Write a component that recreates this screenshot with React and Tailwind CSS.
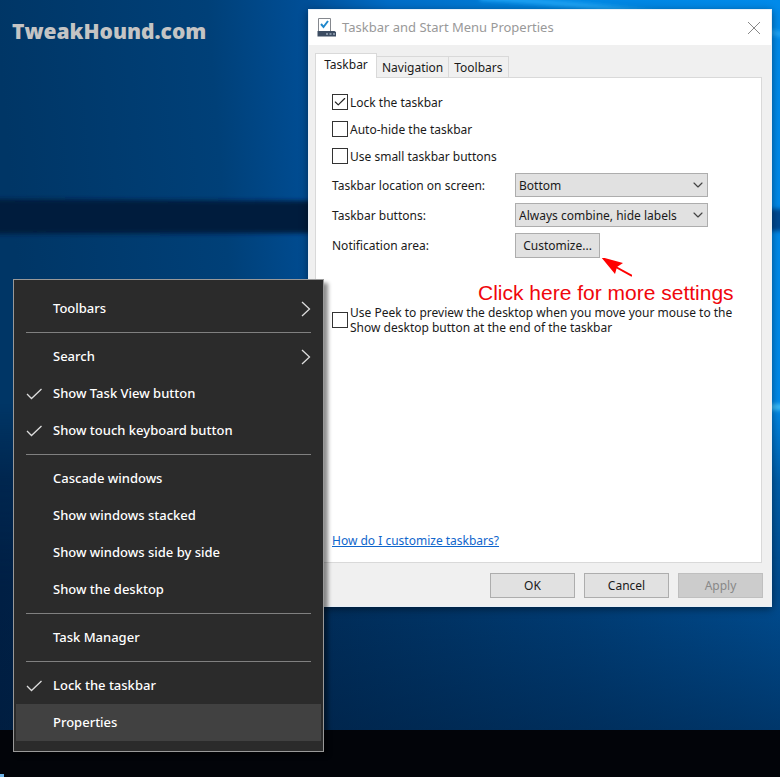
import { Check, ChevronDown } from "lucide-react";

const tabs = ["Taskbar", "Navigation", "Toolbars"];

const options = [
  { id: "lock", label: "Lock the taskbar", checked: true },
  { id: "autohide", label: "Auto-hide the taskbar", checked: false },
  { id: "small", label: "Use small taskbar buttons", checked: false },
];

const menuGroups = [
  [{ label: "Toolbars", submenu: true }],
  [
    { label: "Search", submenu: true },
    { label: "Show Task View button", checked: true },
    { label: "Show touch keyboard button", checked: true },
  ],
  [
    { label: "Cascade windows" },
    { label: "Show windows stacked" },
    { label: "Show windows side by side" },
    { label: "Show the desktop" },
  ],
  [{ label: "Task Manager" }],
  [{ label: "Lock the taskbar", checked: true }, { label: "Properties", active: true }],
];

function Wallpaper() {
  return (
    <svg className="absolute inset-0 h-full w-full" viewBox="0 0 780 777" preserveAspectRatio="none" aria-hidden="true">
      <defs>
        <linearGradient id="sky" x1="0" y1="0.08" x2="1" y2="0">
          <stop offset="0" stopColor="#003666" />
          <stop offset="0.27" stopColor="#004078" />
          <stop offset="0.4" stopColor="#004f98" />
          <stop offset="0.5" stopColor="#006cc6" />
          <stop offset="0.75" stopColor="#0086e2" />
          <stop offset="1" stopColor="#008aea" />
        </linearGradient>
        <linearGradient id="floor" x1="0" y1="0" x2="1" y2="0">
          <stop offset="0" stopColor="#001f44" />
          <stop offset="0.4" stopColor="#002c58" />
          <stop offset="0.75" stopColor="#003c74" />
          <stop offset="1" stopColor="#004a8c" />
        </linearGradient>
        <linearGradient id="fade" x1="0" y1="0" x2="0" y2="1">
          <stop offset="0.52" stopColor="white" stopOpacity="0" />
          <stop offset="0.62" stopColor="white" stopOpacity="0.7" />
          <stop offset="0.76" stopColor="white" stopOpacity="1" />
        </linearGradient>
        <linearGradient id="dusk" x1="0" y1="0" x2="0" y2="1">
          <stop offset="0.78" stopColor="#001c3c" stopOpacity="0" />
          <stop offset="0.95" stopColor="#001c3c" stopOpacity="0.45" />
        </linearGradient>
        <mask id="lower"><rect width="780" height="777" fill="url(#fade)" /></mask>
        <filter id="soft" x="-10%" y="-50%" width="120%" height="200%"><feGaussianBlur stdDeviation="2" /></filter>
        <filter id="glow" filterUnits="userSpaceOnUse" x="740" y="390" width="60" height="34"><feGaussianBlur stdDeviation="2" /></filter>
      </defs>
      <rect width="780" height="777" fill="url(#sky)" />
      <rect width="780" height="777" fill="url(#floor)" mask="url(#lower)" />
      <rect width="780" height="777" fill="url(#dusk)" />
      <path d="M-10 199L320 201V233L-10 234z" fill="#001c3e" filter="url(#soft)" />
      <path d="M760 209H790V231H760z" fill="#004a92" filter="url(#soft)" />
      <path d="M480 -2Q640 6 790 36" stroke="#22a8f8" strokeWidth="5" fill="none" filter="url(#soft)" />
      <path d="M760 407H790" stroke="#3cc0fa" strokeWidth="6" fill="none" filter="url(#glow)" />
    </svg>
  );
}

function PropertiesIcon() {
  return (
    <svg className="h-5 w-5 shrink-0" viewBox="0 0 20 20" fill="none" aria-hidden="true">
      <path d="M1.500 14V.5h12V14" fill="#fff" stroke="#85888e" />
      <path d="M4 6l2.500 3 4.500-6" stroke="#2088cc" strokeWidth="2" />
      <path d="M.5 13h17l1.500 1v4.500H.5z" fill="#3c4c62" />
      <path d="M9 16h2M12.500 16h2M16 16h2" stroke="#9aa9bb" strokeWidth="1.5" />
    </svg>
  );
}

function CheckBox({ id, checked }) {
  return (
    <span className="relative grid h-4 w-4 shrink-0 place-items-center">
      <input id={id} type="checkbox" defaultChecked={checked} className="peer h-4 w-4 appearance-none border border-[#333] bg-white" />
      <Check className="pointer-events-none absolute hidden h-3.5 w-3.5 text-[#222] peer-checked:block" strokeWidth={2} />
    </span>
  );
}

function SelectRow({ id, label, choices }) {
  return (
    <div className="flex items-center">
      <label htmlFor={id} className="w-[183px] shrink-0">{label}</label>
      <div className="relative w-[193px]">
        <select id={id} className="block h-6 w-full appearance-none border border-[#adadad] bg-[#e1e1e1] pl-[3px]">
          {choices.map((c) => <option key={c}>{c}</option>)}
        </select>
        <ChevronDown className="pointer-events-none absolute top-1 right-0.5 h-4 w-4 text-[#444]" strokeWidth={1.75} />
      </div>
    </div>
  );
}

function PropertiesDialog() {
  return (
    <section className="absolute top-[9px] right-2 w-[464px] border border-[#e8f0f8] bg-[#f0f0f0] shadow-[0_2px_8px_rgba(0,0,0,0.45)]">
      <header className="flex h-[35px] items-center bg-white px-2">
        <PropertiesIcon />
        <h1 className="ml-[5px] flex-1 text-[13px] text-[#999]">Taskbar and Start Menu Properties</h1>
        <button aria-label="Close" className="p-0.5">
          <svg className="h-[14px] w-[14px]" viewBox="0 0 14 14" fill="none" stroke="#888" aria-hidden="true">
            <path d="M1 1l12 12M13 1L1 13" />
          </svg>
        </button>
      </header>

      <div className="px-1.5 pt-2 text-[12px] leading-[15px] text-[#1a1a1a]">
        <div role="tablist" className="flex items-end">
          {tabs.map((t, i) => (
            <button
              key={t}
              role="tab"
              aria-selected={i === 0}
              className={i === 0 ? "relative z-10 -mb-px h-[25px] w-[62px] border border-b-0 border-[#d9d9d9] bg-white pb-1" : "h-[21px] border border-b-0 border-l-0 border-[#d9d9d9] px-[5px]"}
            >
              {t}
            </button>
          ))}
        </div>

        <div className="mr-[3px] flex h-[486px] flex-col border border-[#d9d9d9] bg-white px-4 pt-4 pb-3.5">
          <div className="flex flex-col gap-[11px]">
            {options.map((o) => (
              <div key={o.id} className="flex items-center gap-0.5">
                <CheckBox id={o.id} checked={o.checked} />
                <label htmlFor={o.id}>{o.label}</label>
              </div>
            ))}
          </div>

          <div className="mt-[9px] flex flex-col gap-1.5">
            <SelectRow id="location" label="Taskbar location on screen:" choices={["Bottom", "Left", "Right", "Top"]} />
            <SelectRow id="combine" label="Taskbar buttons:" choices={["Always combine, hide labels", "Combine when taskbar is full", "Never combine"]} />
            <div className="flex items-center">
              <span id="notify" className="w-[183px] shrink-0">Notification area:</span>
              <div className="relative">
                <button aria-describedby="notify" className="h-[25px] w-[85px] border border-[#adadad] bg-[#e1e1e1]">Customize...</button>
                <svg className="absolute top-full left-full h-5 w-8" viewBox="0 0 32 20" aria-hidden="true">
                  <path d="M14 8L32 18" stroke="#f00" strokeWidth="2" />
                  <path d="M1 -1l22 6-6 4-2 7z" fill="#f00" />
                </svg>
              </div>
            </div>
          </div>

          <p className="mt-[23px] pl-[146px] font-['Liberation_Sans'] text-[21px] leading-6 whitespace-nowrap text-[#f0060c]">Click here for more settings</p>
          <div className="flex items-center gap-0.5">
            <CheckBox id="peek" checked={false} />
            <label htmlFor="peek" className="whitespace-nowrap">
              Use Peek to preview the desktop when you move your mouse to the<br />Show desktop button at the end of the taskbar
            </label>
          </div>

          <a href="#help" className="mt-auto self-start text-[#0f66cc] underline">How do I customize taskbars?</a>
        </div>

        <footer className="mr-0.5 flex justify-end gap-[9px] pt-[10px] pb-2">
          <button className="h-[25px] w-[85px] border border-[#adadad] bg-[#e1e1e1]">OK</button>
          <button className="h-[25px] w-[85px] border border-[#adadad] bg-[#e1e1e1]">Cancel</button>
          <button disabled className="h-[25px] w-[85px] border border-[#bfbfbf] bg-[#ccc] text-[#888]">Apply</button>
        </footer>
      </div>
    </section>
  );
}

function TaskbarMenu() {
  return (
    <nav className="absolute bottom-[25px] left-[13px] w-[311px] border border-[#999] bg-[#2b2b2b] px-0.5 py-[10px] text-[13px] font-medium text-white shadow-[4px_4px_4px_rgba(0,0,0,0.45)]">
      {menuGroups.map((group, g) => (
        <div key={g}>
          {g > 0 && <hr className="mx-2.5 my-[5px] border-[#808080]" />}
          {group.map((item) => (
            <button key={item.label} className={`flex h-[37px] w-full items-center px-2.5 ${item.active ? "bg-[#414141]" : ""}`}>
              <span className="w-[27px]">
                {item.checked && (
                  <svg className="h-4 w-4" viewBox="0 0 16 16" fill="none" stroke="#ddd" strokeWidth="1.3" aria-hidden="true">
                    <path d="M1 8l4.500 4.500L15.500 3" />
                  </svg>
                )}
              </span>
              <span className="flex-1 text-left">{item.label}</span>
              {item.submenu && (
                <svg className="h-4 w-[10px]" viewBox="0 0 10 16" fill="none" stroke="#ddd" strokeWidth="1.3" aria-hidden="true">
                  <path d="M1 1l7.500 7L1 15" />
                </svg>
              )}
            </button>
          ))}
        </div>
      ))}
    </nav>
  );
}

export default function App() {
  return (
    <div className="relative flex min-h-screen flex-col overflow-hidden bg-[#003465] font-['Noto_Sans','Open_Sans',sans-serif]">
      <Wallpaper />
      <main className="flex-1 px-3 pt-4">
        <p className="relative font-['Open_Sans'] text-[21px] leading-[30px] font-extrabold text-[#c4c4c4]">TweakHound.com</p>
      </main>
      <div className="relative flex h-[47px] items-end bg-[#020409]">
        <span className="h-[3px] w-1 bg-[#6db3e8]" />
      </div>
      <PropertiesDialog />
      <TaskbarMenu />
    </div>
  );
}
